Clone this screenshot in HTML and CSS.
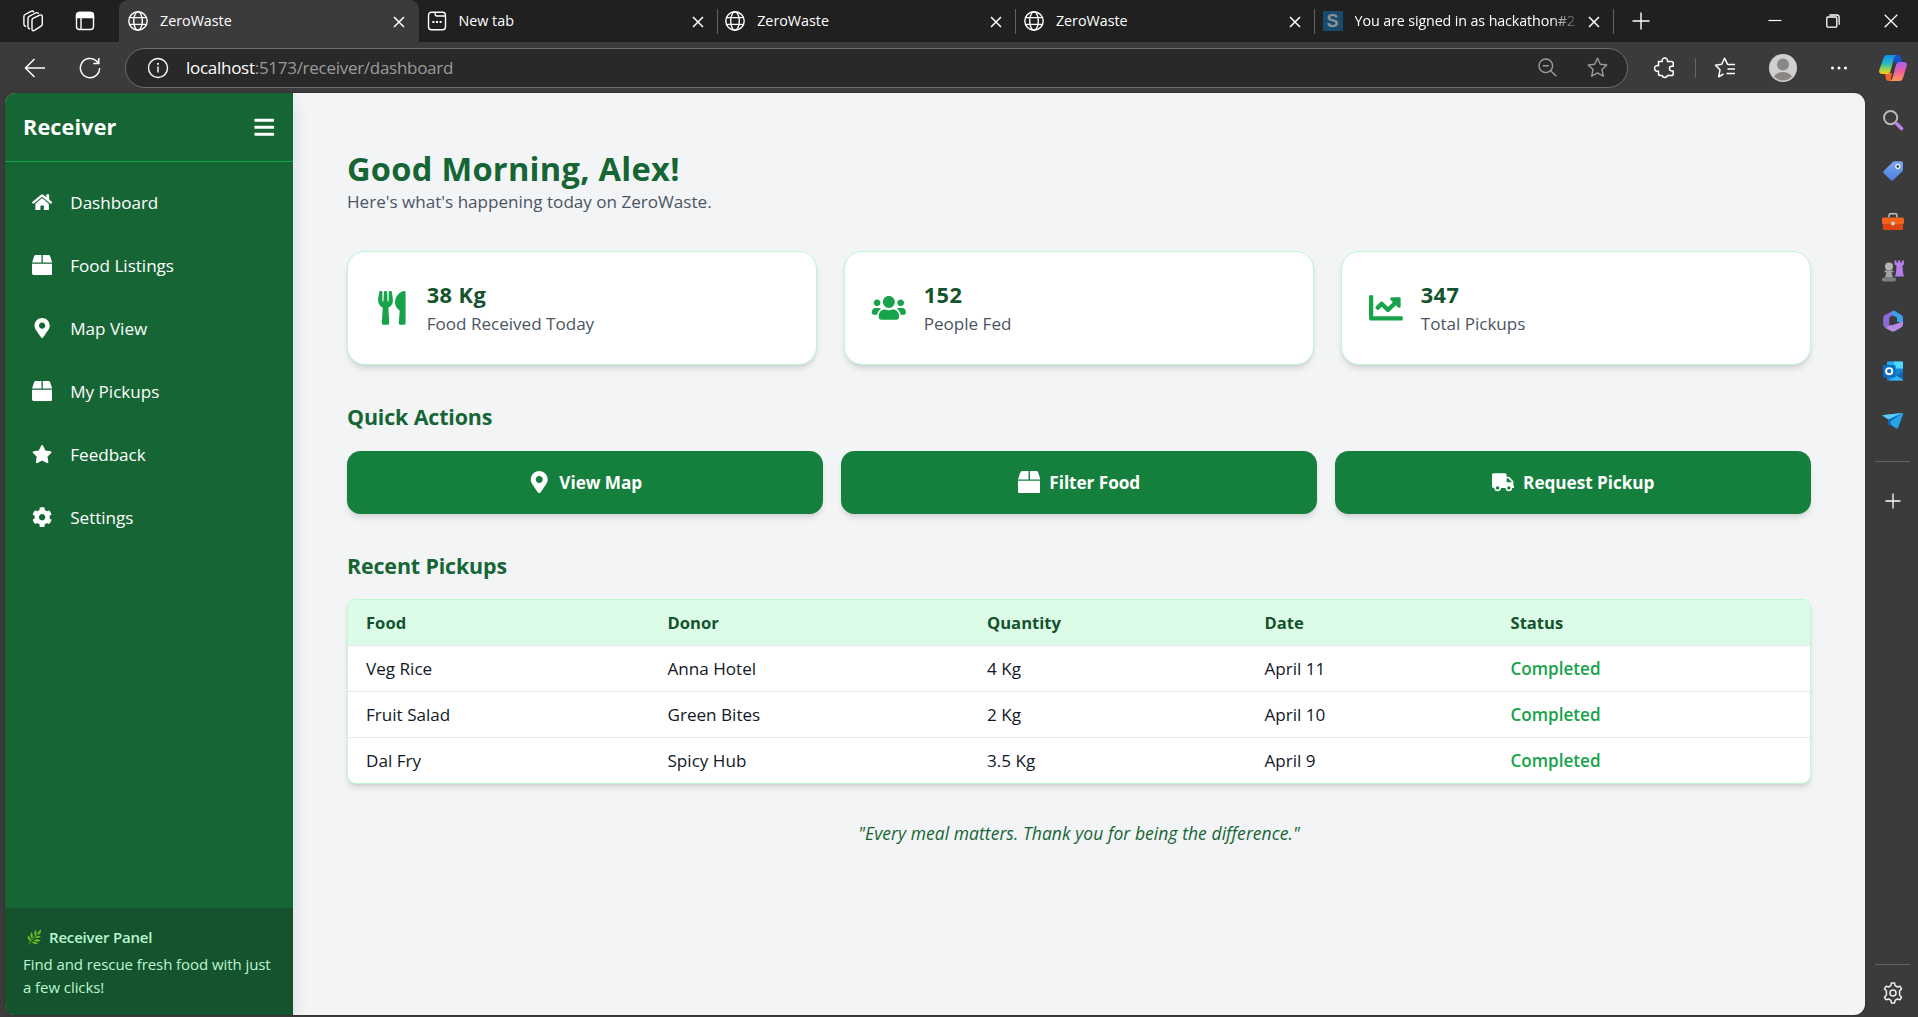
FILE: index.html
```html
<!DOCTYPE html>
<html lang="en">
<head>
<meta charset="utf-8">
<title>ZeroWaste</title>
<link rel="stylesheet" href="styles.css">
</head>
<body>
<svg class="defs" aria-hidden="true">
  <symbol id="globe" viewBox="0 0 20 20"><g fill="none" stroke="currentColor" stroke-width="1.4"><circle cx="10" cy="10" r="9.2"/><ellipse cx="10" cy="10" rx="4.3" ry="9.2"/><path d="M1.6 6.6h16.8M1.6 13.4h16.8"/></g></symbol>
  <symbol id="close" viewBox="0 0 12 12"><path d="M1 1l10 10M11 1L1 11" fill="none" stroke="currentColor" stroke-width="1.5"/></symbol>
  <symbol id="plus" viewBox="0 0 18 18"><path d="M9 .5v17M.5 9h17" fill="none" stroke="currentColor" stroke-width="1.4"/></symbol>
  <symbol id="box" viewBox="0 0 512 512"><path d="M509.5 184.6L458.9 32.8C452.4 13.2 434.1 0 413.4 0H272v192h238.7c-.4-2.5-.4-5-1.2-7.4zM240 0H98.6c-20.7 0-39 13.2-45.5 32.8L2.5 184.6c-.8 2.4-.8 4.9-1.2 7.4H240V0zM0 224v240c0 26.5 21.5 48 48 48h416c26.5 0 48-21.5 48-48V224H0z"/></symbol>
  <symbol id="pin" viewBox="0 0 384 512"><path d="M172.268 501.67C26.97 291.031 0 269.413 0 192 0 85.961 85.961 0 192 0s192 85.961 192 192c0 77.413-26.97 99.031-172.268 309.67-9.535 13.774-29.93 13.773-39.464 0zM192 272c44.183 0 80-35.817 80-80s-35.817-80-80-80-80 35.817-80 80 35.817 80 80 80z"/></symbol>
</svg>

<header class="tabbar">
  <div class="tab-tools">
    <svg width="22" height="22" viewBox="0 0 22 22" fill="none" stroke="currentColor" stroke-width="1.400" stroke-linejoin="round" stroke-linecap="round"><path d="M10 10.200q0-1.400 1.300-2l6.500-3q2.500-1 2.500 1.500v7.500q0 1.300-1.200 2l-6.300 4q-2.800 1.500-2.800-1.300z"/><path d="M7.500 18.800q-1.500-.4-1.500-2V8.300q0-1.300 1.200-2l6.300-3.300q2-.9 2.800.4"/><path d="M3.500 16.300q-1.600-.4-1.600-2V6.500q0-1.300 1.200-2L9 1.400q1.800-.8 2.700.3"/></svg>
    <svg width="20" height="20" viewBox="0 0 20 20" fill="none" stroke="currentColor" stroke-width="1.400"><rect x="1.500" y="1.500" width="17" height="17" rx="3"/><path d="M1.500 6.500V4.500a3 3 0 0 1 3-3h11a3 3 0 0 1 3 3v2z" fill="currentColor"/><path d="M6 6v12.500"/></svg>
  </div>
  <div class="tab active"><svg class="fav"><use href="#globe"/></svg><span class="tab-title">ZeroWaste</span><svg class="x"><use href="#close"/></svg></div>
  <div class="tab"><svg class="fav" viewBox="0 0 20 20" fill="none" stroke="currentColor" stroke-width="1.400"><rect x="1.500" y="1.200" width="17" height="17.600" rx="3"/><path d="M8.200 1.200v2q0 1.800 1.800 1.800h8.500"/><path d="M5.400 11h2M9 11h2M12.600 11h2" stroke-width="2"/></svg><span class="tab-title">New tab</span><svg class="x"><use href="#close"/></svg></div>
  <div class="tab"><svg class="fav"><use href="#globe"/></svg><span class="tab-title">ZeroWaste</span><svg class="x"><use href="#close"/></svg></div>
  <div class="tab"><svg class="fav"><use href="#globe"/></svg><span class="tab-title">ZeroWaste</span><svg class="x"><use href="#close"/></svg></div>
  <div class="tab"><span class="fav skill">S</span><span class="tab-title fade">You are signed in as hackathon#2</span><svg class="x"><use href="#close"/></svg></div>
  <svg class="newtab"><use href="#plus"/></svg>
  <div class="window-buttons">
    <svg width="14" height="14" viewBox="0 0 14 14"><path d="M.5 6.500h13" stroke="currentColor" stroke-width="1.200"/></svg>
    <svg width="14" height="14" viewBox="0 0 14 14" fill="none" stroke="currentColor" stroke-width="1.300"><rect x=".8" y="3" width="10" height="10.200" rx="1.200"/><path d="M3.300 1h7.500q2.300 0 2.300 2.300v7.500"/></svg>
    <svg width="14" height="14" viewBox="0 0 14 14"><path d="M.7.700l12.600 12.600M13.300.7L.7 13.300" stroke="currentColor" stroke-width="1.300"/></svg>
  </div>
</header>

<div class="toolbar">
  <div class="nav-buttons">
    <svg width="22" height="20" viewBox="0 0 22 20" fill="none" stroke="currentColor" stroke-width="1.500"><path d="M21 10H1.500M10.500 1L1.500 10l9 9"/></svg>
    <svg width="22" height="22" viewBox="0 0 22 22" fill="none" stroke="currentColor" stroke-width="1.500"><path d="M20.600 11a9.600 9.600 0 1 1-3.200-7.100L19.500 6M19.800 1v5.500h-5.500"/></svg>
  </div>
  <div class="address">
    <svg width="22" height="22" viewBox="0 0 22 22" fill="none" stroke="currentColor" stroke-width="1.400"><circle cx="11" cy="11" r="9.500"/><path d="M11 9.500v6"/><path d="M11 6v1.800" stroke-width="1.800"/></svg>
    <span class="url"><b>localhost</b>:5173/receiver/dashboard</span>
    <svg class="dim" width="19" height="19" viewBox="0 0 19 19" fill="none" stroke="currentColor" stroke-width="1.400"><circle cx="7.800" cy="7.800" r="6.800"/><path d="M12.700 12.700l5.600 5.600M4.800 7.800h6"/></svg>
    <svg class="dim" width="21" height="21" viewBox="0 0 21 21" fill="none" stroke="currentColor" stroke-width="1.400" stroke-linejoin="round"><path d="M10.500 1.200l2.800 6 6.500.8-4.800 4.500 1.300 6.700-5.800-3.300-5.800 3.300L6 12.500 1.200 8l6.500-.8z"/></svg>
  </div>
  <div class="browser-tools">
    <svg width="22" height="22" viewBox="0 0 22 22" fill="none" stroke="currentColor" stroke-width="1.500" stroke-linejoin="round"><path d="M4.500 4.500h3.700a2.700 2.700 0 1 1 5.200 0h4q1.800 0 1.800 1.800v3h-1.500a2 2 0 0 0 0 4.600h1.500v2.800q0 1.800-1.800 1.800h-4a2.700 2.700 0 0 1-5.200 0H6.300q-1.800 0-1.800-1.800v-2.600a2.900 2.900 0 1 1 0-5.400z"/></svg>
    <i class="divider"></i>
    <svg width="22" height="22" viewBox="0 0 22 22" fill="none" stroke="currentColor" stroke-width="1.500" stroke-linejoin="round"><path d="M21 7.500h-6l-1.500-.3-3-6-2.800 6-6.200 1 4.500 4.600-1.300 7 4.800-2.800M13.500 12H21M12.500 16.500H21"/></svg>
    <svg class="avatar" width="28" height="28" viewBox="0 0 28 28"><clipPath id="c"><circle cx="14" cy="14" r="12.500"/></clipPath><circle cx="14" cy="14" r="14" fill="#d2d0ce"/><circle cx="14" cy="10.500" r="6" fill="#8a8886"/><ellipse cx="14" cy="24.500" rx="9.500" ry="6.500" fill="#8a8886" clip-path="url(#c)"/></svg>
    <svg width="18" height="4" viewBox="0 0 18 4" fill="currentColor"><circle cx="2.500" cy="2" r="1.500"/><circle cx="9" cy="2" r="1.500"/><circle cx="15.500" cy="2" r="1.500"/></svg>
    <svg width="28" height="28" viewBox="0 0 28 28"><defs><linearGradient id="k1" x1="0" y1="0" x2="0" y2="1"><stop offset="0" stop-color="#0f8fe8"/><stop offset=".45" stop-color="#28b9c4"/><stop offset=".75" stop-color="#9bd34a"/><stop offset="1" stop-color="#ffcb1c"/></linearGradient><linearGradient id="k2" x1="0" y1="0" x2="0" y2="1"><stop offset="0" stop-color="#a75cf0"/><stop offset=".5" stop-color="#ee5f9f"/><stop offset="1" stop-color="#ff9a4e"/></linearGradient></defs><path d="M14 1h5q2 0 2.700 2l1.800 6h-7.500z" fill="#1552c8"/><path d="M6 19h7l-1.500 8h-2q-2 0-2.600-2z" fill="#f4642a"/><path d="M8 1h10q-2.300.6-3 3l-3.600 13.500q-.8 2.500-3.500 2.500H3q-3.500 0-2.700-4L4.500 4Q5.500 1 8 1z" fill="url(#k1)"/><path d="M20.500 27h-10q2.300-.6 3-3l3.600-13.500Q17.900 8 20.600 8H25q3.600 0 2.700 4L24 24q-1 3-3.500 3z" fill="url(#k2)"/></svg>
  </div>
</div>

<div class="window">
  <div class="page">
    <aside class="sidebar">
      <div class="side-head"><h2>Receiver</h2><svg width="22.500" height="22.500" viewBox="0 0 448 512"><path d="M16 132h416c8.837 0 16-7.163 16-16V76c0-8.837-7.163-16-16-16H16C7.163 60 0 67.163 0 76v40c0 8.837 7.163 16 16 16zm0 160h416c8.837 0 16-7.163 16-16v-40c0-8.837-7.163-16-16-16H16c-8.837 0-16 7.163-16 16v40c0 8.837 7.163 16 16 16zm0 160h416c8.837 0 16-7.163 16-16v-40c0-8.837-7.163-16-16-16H16c-8.837 0-16 7.163-16 16v40c0 8.837 7.163 16 16 16z"/></svg></div>
      <nav class="side-nav">
        <a><svg viewBox="0 0 576 512"><path d="M280.37 148.26L96 300.11V464a16 16 0 0 0 16 16l112.06-.29a16 16 0 0 0 15.920-16V368a16 16 0 0 1 16-16h64a16 16 0 0 1 16 16v95.640a16 16 0 0 0 16 16.050L464 480a16 16 0 0 0 16-16V300L295.670 148.260a12.190 12.190 0 0 0-15.300 0zM571.600 251.470L488 182.560V44.050a12 12 0 0 0-12-12h-56a12 12 0 0 0-12 12v72.610L318.470 43a48 48 0 0 0-61 0L4.340 251.470a12 12 0 0 0-1.600 16.900l25.500 31A12 12 0 0 0 45.150 301l235.220-193.740a12.190 12.190 0 0 1 15.300 0L530.900 301a12 12 0 0 0 16.900-1.600l25.500-31a12 12 0 0 0-1.700-16.930z"/></svg>Dashboard</a>
        <a><svg><use href="#box"/></svg>Food Listings</a>
        <a><svg><use href="#pin"/></svg>Map View</a>
        <a><svg><use href="#box"/></svg>My Pickups</a>
        <a><svg viewBox="0 0 576 512"><path d="M259.300 17.800L194 150.200 47.900 171.500c-26.200 3.800-36.700 36.100-17.700 54.600l105.700 103-25 145.500c-4.500 26.300 23.200 46 46.400 33.700L288 439.600l130.700 68.700c23.200 12.200 50.900-7.400 46.400-33.700l-25-145.500 105.700-103c19-18.500 8.500-50.800-17.700-54.600L382 150.200 316.700 17.800c-11.700-23.600-45.600-23.900-57.400 0z"/></svg>Feedback</a>
        <a><svg viewBox="0 0 512 512"><path d="M487.400 315.700l-42.600-24.600c4.300-23.200 4.300-47 0-70.200l42.600-24.600c4.900-2.800 7.100-8.600 5.500-14-11.100-35.600-30-67.800-54.700-94.600-3.800-4.100-10-5.100-14.800-2.300L380.800 110c-17.900-15.400-38.500-27.300-60.800-35.100V25.800c0-5.600-3.900-10.500-9.400-11.700-36.700-8.200-74.300-7.800-109.200 0-5.500 1.200-9.400 6.100-9.400 11.700V75c-22.200 7.900-42.800 19.800-60.800 35.100L88.700 85.500c-4.900-2.800-11-1.900-14.800 2.300-24.700 26.700-43.600 58.900-54.700 94.600-1.700 5.400.6 11.200 5.500 14L67.300 221c-4.300 23.200-4.300 47 0 70.200l-42.600 24.600c-4.900 2.800-7.100 8.600-5.500 14 11.100 35.600 30 67.800 54.700 94.600 3.800 4.100 10 5.100 14.800 2.300l42.600-24.600c17.900 15.400 38.500 27.300 60.800 35.100v49.200c0 5.600 3.900 10.500 9.400 11.700 36.700 8.200 74.300 7.800 109.200 0 5.500-1.200 9.400-6.100 9.400-11.700v-49.200c22.200-7.900 42.800-19.800 60.800-35.100l42.600 24.600c4.900 2.800 11 1.900 14.800-2.300 24.700-26.700 43.600-58.900 54.700-94.600 1.500-5.500-.7-11.300-5.600-14.100zM256 336c-44.100 0-80-35.900-80-80s35.900-80 80-80 80 35.900 80 80-35.900 80-80 80z"/></svg>Settings</a>
      </nav>
      <div class="side-foot">
        <p class="panel"><svg width="15" height="16" viewBox="0 0 15 16" fill="#6cc024"><path d="M2 15.500Q5 9 11.500 4" fill="none" stroke="#4b9a1c" stroke-width="1.200"/><path d="M14 .5q.5 4.500-3 5-.5-3.500 3-5zM8.500.8q2.200 3-.3 6-2-3 .3-6zM4.300 3q2.500 3 .8 6.500Q2.300 7 4.300 3zM.8 6.500q3.200 1.800 3 5.500Q.2 11 .8 6.500zM14 7q-2.500 3.200-6 1.500Q10 5.800 14 7zM13.500 11.500q-4 2.500-7-.2 3.500-2.300 7 .2zM11 14.700q-4 1.300-6.500-1.700 4-1 6.500 1.700z"/></svg>Receiver Panel</p>
        <p>Find and rescue fresh food with just a few clicks!</p>
      </div>
    </aside>
    <main>
      <h1>Good Morning, Alex!</h1>
      <p class="sub">Here's what's happening today on ZeroWaste.</p>
      <section class="cards">
        <div class="card"><svg viewBox="0 0 416 512"><path d="M207.900 15.200c.8 4.700 16.100 94.500 16.100 128.800 0 52.300-27.800 89.600-68.900 104.600L168 486.700c.7 13.700-10.200 25.300-24 25.300H80c-13.700 0-24.700-11.500-24-25.300l12.900-238.100C27.700 233.600 0 196.200 0 144 0 109.600 15.300 19.900 16.100 15.200 19.300-5.100 61.400-5.400 64 16.300v141.200c1.300 3.400 15.100 3.200 16 0 1.400-25.300 7.900-139.200 8-141.800 3.300-20.800 44.700-20.800 47.900 0 .2 2.700 6.600 116.500 8 141.800.9 3.200 14.800 3.400 16 0V16.300c2.600-21.600 44.800-21.400 48-1.100zm119.200 285.700l-15 185.100c-1.200 14 9.900 26 23.900 26h56c13.300 0 24-10.700 24-24V24c0-13.200-10.700-24-24-24-82.500 0-221.400 178.500-64.900 300.900z"/></svg><div><h3>38 Kg</h3><p>Food Received Today</p></div></div>
        <div class="card"><svg viewBox="0 0 640 512"><path d="M96 224c35.300 0 64-28.700 64-64s-28.700-64-64-64-64 28.700-64 64 28.700 64 64 64zm448 0c35.300 0 64-28.700 64-64s-28.700-64-64-64-64 28.700-64 64 28.700 64 64 64zm32 32h-64c-17.600 0-33.500 7.100-45.100 18.600 40.300 22.100 68.900 62 75.100 109.400h66c17.700 0 32-14.300 32-32v-32c0-35.300-28.700-64-64-64zm-256 0c61.900 0 112-50.100 112-112S381.900 32 320 32 208 82.100 208 144s50.100 112 112 112zm76.800 32h-8.300c-20.800 10-43.900 16-68.500 16s-47.600-6-68.500-16h-8.300C179.600 288 128 339.600 128 403.200V432c0 26.500 21.500 48 48 48h288c26.500 0 48-21.500 48-48v-28.800c0-63.600-51.600-115.200-115.200-115.200zm-223.700-13.400C161.500 263.100 145.600 256 128 256H64c-35.300 0-64 28.700-64 64v32c0 17.700 14.300 32 32 32h65.900c6.300-47.400 34.900-87.300 75.200-109.400z"/></svg><div><h3>152</h3><p>People Fed</p></div></div>
        <div class="card"><svg viewBox="0 0 512 512"><path d="M496 384H64V80c0-8.840-7.160-16-16-16H16C7.160 64 0 71.160 0 80v336c0 17.670 14.330 32 32 32h464c8.840 0 16-7.160 16-16v-32c0-8.840-7.160-16-16-16zM464 96H345.940c-21.380 0-32.090 25.850-16.970 40.970l32.400 32.400L288 242.750l-73.370-73.370c-12.500-12.500-32.760-12.500-45.250 0l-68.690 68.690c-6.250 6.250-6.250 16.380 0 22.630l22.620 22.620c6.250 6.250 16.380 6.250 22.630 0L192 237.250l73.370 73.370c12.500 12.500 32.760 12.500 45.250 0l96-96 32.400 32.400c15.120 15.120 40.970 4.410 40.970-16.970V112c.01-8.840-7.150-16-15.990-16z"/></svg><div><h3>347</h3><p>Total Pickups</p></div></div>
      </section>
      <section>
        <h2>Quick Actions</h2>
        <div class="actions">
          <button><svg><use href="#pin"/></svg>View Map</button>
          <button><svg><use href="#box"/></svg>Filter Food</button>
          <button><svg viewBox="0 0 640 512"><path d="M624 352h-16V243.900c0-12.700-5.100-24.900-14.100-33.900L494 110.100c-9-9-21.200-14.100-33.900-14.100H416V48c0-26.500-21.500-48-48-48H48C21.500 0 0 21.500 0 48v320c0 26.500 21.500 48 48 48h16c0 53 43 96 96 96s96-43 96-96h128c0 53 43 96 96 96s96-43 96-96h48c8.800 0 16-7.200 16-16v-32c0-8.800-7.200-16-16-16zM160 464c-26.500 0-48-21.500-48-48s21.500-48 48-48 48 21.500 48 48-21.500 48-48 48zm320 0c-26.500 0-48-21.500-48-48s21.500-48 48-48 48 21.500 48 48-21.500 48-48 48zm80-208H416V144h44.100l99.900 99.900V256z"/></svg>Request Pickup</button>
        </div>
      </section>
      <section>
        <h2>Recent Pickups</h2>
        <div class="table-wrap">
          <table>
            <colgroup><col class="c1"><col class="c2"><col class="c3"><col class="c4"><col></colgroup>
            <thead><tr><th>Food</th><th>Donor</th><th>Quantity</th><th>Date</th><th>Status</th></tr></thead>
            <tbody>
              <tr><td>Veg Rice</td><td>Anna Hotel</td><td>4 Kg</td><td>April 11</td><td class="done">Completed</td></tr>
              <tr><td>Fruit Salad</td><td>Green Bites</td><td>2 Kg</td><td>April 10</td><td class="done">Completed</td></tr>
              <tr><td>Dal Fry</td><td>Spicy Hub</td><td>3.5 Kg</td><td>April 9</td><td class="done">Completed</td></tr>
            </tbody>
          </table>
        </div>
      </section>
      <p class="quote">"Every meal matters. Thank you for being the difference."</p>
    </main>
  </div>

  <div class="rail">
    <svg viewBox="0 0 22 22" fill="none"><circle cx="8.600" cy="8.600" r="6.600" stroke="#b9b9b9" stroke-width="2"/><path d="M15 15l4.500 4.500" stroke="#b583ea" stroke-width="3.600" stroke-linecap="round"/></svg>
    <svg viewBox="0 0 22 22"><defs><linearGradient id="tg" x1="0" y1="0" x2="0" y2="1"><stop offset="0" stop-color="#7aa7f3"/><stop offset="1" stop-color="#4a7fe0"/></linearGradient></defs><g transform="translate(0 1)"><path d="M12.500 1.200h6.500q2 0 2 2V9.500q0 1-.7 1.700l-8.900 8.900q-1.400 1.200-2.800 0L1.900 13.400q-1.200-1.300 0-2.700L10.800 2q.7-.8 1.700-.8z" fill="url(#tg)"/><circle cx="15.800" cy="6.500" r="2" fill="#333" stroke="#e8eefc" stroke-width="1.400"/></g></svg>
    <svg viewBox="0 0 22 22"><path d="M7 8.500V6.400q0-1.600 1.600-1.600h4.800q1.600 0 1.600 1.600v2.100" fill="none" stroke="#c4c4c4" stroke-width="1.500"/><rect x="1" y="12" width="20" height="9" rx="1.500" fill="#dd4513"/><rect y="8.500" width="22" height="6.500" rx="1.500" fill="#f4631e"/><circle cx="11" cy="14.500" r="2" fill="#cfcfcf"/></svg>
    <svg viewBox="0 0 22 22"><path d="M12.500.5h2v2h1.600v-2h2.200v2h1.600v-2h2v4l-1.500 1.200.6 7.300 1 3.500h-9l1-3.500.6-7.300-2.100-1.200z" fill="#b57ee8"/><circle cx="7" cy="6.500" r="4" fill="#b5b5b5"/><path d="M2.500 10.500h9v1.800H9.500l1.500 5.200h-8l1.500-5.200h-2z" fill="#a3a3a3"/><rect y="17.500" width="14" height="4" rx="1.800" fill="#7e7e7e"/></svg>
    <svg viewBox="0 0 22 22"><path d="M10.500 1L2.700 5.200Q1.200 6 1.200 8v6.500q0 2 1.500 2.800L6 19l2.600-3-1.400-1V8.500q0-1.200 1-1.800L14 3.500Q12 0 10.500 1z" fill="#8a6ad8"/><path d="M12.500.8l7 4.300q1.500 1 1.500 2.900v6l-6-2.500V8.500q0-1-1-1.500l-4-1.800V1.800Q11.500 0 12.500.8z" fill="#3aa0e8"/><path d="M21 11.500v3q0 1.800-1.500 2.700L13 21q-2 1-4 0l-5.500-3 5-3q1.500.6 2.500 0z" fill="#b68be4"/></svg>
    <svg viewBox="0 0 22 22"><rect x="5" y="1.500" width="16" height="19" rx="1.500" fill="#1784d8"/><path d="M6 1.500h6v7H5v-6q0-1 1-1z" fill="#28a8ea"/><path d="M12 1.500h8q1 0 1 1v6h-9z" fill="#50d9ff"/><path d="M21 10.500v9q0 1-1 1H7z" fill="#32b5f0"/><path d="M21 10.500l-7 5 7 4z" fill="#1268b8"/><rect x="1" y="5" width="12.500" height="12.500" rx="1.200" fill="#0a6cc4"/><circle cx="7.200" cy="11.200" r="3.100" fill="none" stroke="#fff" stroke-width="1.900"/></svg>
    <svg viewBox="0 0 22 22"><path d="M0 5.200L20 3q1.500 0 1 1.500L16 18q-1 1-2.200.3L10 15.500 6.500 13V9.500z" fill="#25a5e8"/><path d="M0 5.200L20 3 6.500 9.500z" fill="#58cdfb"/><path d="M6.500 9.500L20.500 3.300 8.500 11v4.500L6.500 16z" fill="#0c63b4"/></svg>
    <i class="rule"></i>
    <svg class="add" viewBox="0 0 18 18"><path d="M9 1.500v15M1.500 9h15" stroke="#fff" stroke-width="1.300"/></svg>
    <div class="rail-end">
      <i class="rule"></i>
      <svg class="gear" viewBox="0 0 24 24" fill="none" stroke="#eee" stroke-width="1.500" stroke-linejoin="round"><circle cx="12" cy="12" r="3"/><path d="M9.900 4.600l.5-2.500q1.600-.4 3.200 0l.5 2.500 2.300 1.400 2.500-.8q1.100 1.200 1.600 2.800l-1.900 1.700v4.600l1.900 1.700q-.5 1.600-1.600 2.800l-2.500-.8-2.300 1.400-.5 2.500q-1.600.4-3.200 0l-.5-2.500L7.600 18l-2.500.8Q4 17.600 3.500 16l1.900-1.700V9.700L3.500 8Q4 6.400 5.100 5.200l2.500.8z"/></svg>
    </div>
  </div>
</div>
</body>
</html>
```
FILE: styles.css
```css
* { box-sizing: border-box; margin: 0; padding: 0; }
html, body { height: 100%; }
body {
  display: flex; flex-direction: column;
  width: 1918px; height: 1017px; overflow: hidden;
  background: #3b3b3b; color: #fff;
  font-family: "Open Sans", "Noto Sans", sans-serif;
  font-size: 17.1px; line-height: 27px;
}
svg { display: block; flex: none; }
.defs { position: absolute; width: 0; height: 0; }

/* browser tab strip */
.tabbar { display: flex; align-items: center; height: 42px; flex: none; background: #202020; }
.tab-tools { display: flex; align-items: center; gap: 31px; width: 119px; height: 42px; padding-left: 22px; }
.tab {
  display: flex; align-items: center; width: 298.700px; height: 42px;
  padding: 0 14px 0 7.500px; font-size: 14.300px; color: #fff; position: relative;
}
.tab.active { background: #3b3b3b; border-radius: 9px 9px 0 0; width: 300px; padding: 0 14px 0 9px; }
.tab:not(.active)::after { content: ""; position: absolute; right: 0; top: 9px; width: 1px; height: 25px; background: #636363; }
.fav { width: 20px; height: 20px; margin-right: 12px; flex: none; }
.skill { background: #174a6d; color: #8d9196; font: bold 18px/20px "Liberation Sans", sans-serif; text-align: center; }
.tab-title { flex: 1; white-space: nowrap; line-height: 42px; padding-bottom: 1px; }
.fade { letter-spacing: -.12px; -webkit-mask-image: linear-gradient(90deg, #000 84%, transparent 97%); mask-image: linear-gradient(90deg, #000 84%, transparent 97%); }
.x { width: 12px; height: 12px; margin: 2px 0 0; }
.newtab { width: 18px; height: 18px; margin-left: 18px; }
.window-buttons { display: flex; gap: 44px; margin-left: auto; padding-right: 20px; }

/* address row */
.toolbar { display: flex; align-items: center; height: 51px; flex: none; }
.nav-buttons { display: flex; align-items: center; gap: 33px; width: 125px; padding-left: 24px; }
.address {
  display: flex; align-items: center; width: 1503px; height: 40px;
  border: 1px solid #6b6b6b; border-radius: 20px; background: #292929; padding: 0 19px 0 21px;
}
.url { flex: 1; margin-left: 17px; color: #9b9b9b; font-size: 17px; letter-spacing: -.28px; }
.url b { font-weight: 400; color: #fff; }
.dim { color: #9b9b9b; margin-left: 30px; }
.browser-tools { display: flex; align-items: center; padding-left: 26px; }
.divider { width: 1px; height: 20px; background: #666; margin: 0 18px 0 19px; }
.avatar { margin: 0 33px; }
.browser-tools svg:last-child { margin-left: 31px; }

/* viewport and right rail */
.window { display: flex; flex: 1; padding: 0 0 2px 5px; min-height: 0; }
.page {
  display: flex; width: 1860px; border-radius: 11px; overflow: hidden;
  background: #f3f4f6; color: #111827; box-shadow: 0 0 2px rgba(0,0,0,.35);
}
.rail { display: flex; flex-direction: column; align-items: center; width: 53px; padding: 16px 0 0 2px; }
.rail > svg { width: 22px; height: 22px; margin-bottom: 28.200px; }
.rule { width: 35px; height: 1px; background: #636363; flex: none; }
.rail > .rule { margin-top: 1px; }
.rail > .add { width: 18px; height: 18px; margin: 30px 0 0; }
.rail-end { display: flex; flex-direction: column; align-items: center; margin-top: auto; padding-bottom: 10px; }
.gear { width: 24px; height: 24px; margin-top: 16px; }

/* app sidebar */
.sidebar {
  display: flex; flex-direction: column; width: 288px; flex: none; z-index: 1;
  background: #166534; color: #fff; box-shadow: 0 9px 17px rgba(0,0,0,.1);
}
.side-head { display: flex; align-items: center; justify-content: space-between; height: 69px; padding: 0 18px; border-bottom: 1px solid #16a34a; }
.side-head h2 { font-size: 21.600px; line-height: 31.500px; letter-spacing: .15px; padding-bottom: 1px; }
.side-head svg, .side-nav svg { fill: #fff; }
.side-nav { display: flex; flex-direction: column; gap: 9px; padding: 13.500px; }
.side-nav a { display: flex; align-items: center; gap: 18px; height: 54px; padding: 0 13.500px; letter-spacing: -.02px; }
.side-nav svg { width: 20.250px; height: 20.250px; }
.side-foot { height: 107px; margin-top: auto; padding: 18px; background: #14532d; color: #bbf7d0; font-size: 15px; line-height: 22.500px; letter-spacing: -.07px; }
.panel { display: flex; align-items: center; gap: 7px; padding-left: 4px; margin-bottom: 4.500px; font-weight: 600; letter-spacing: -.18px; }

/* dashboard */
main { flex: 1; padding: 54px; }
h1 { font-size: 32.600px; line-height: 40.500px; letter-spacing: .28px; color: #166534; padding-top: 2px; height: 40.500px; }
.sub { color: #4b5563; letter-spacing: -.01px; }
.cards { display: grid; grid-template-columns: repeat(3, 1fr); gap: 27px; margin: 36px 0; }
.card {
  display: flex; align-items: center; gap: 18px; height: 114.500px; padding: 27px;
  background: #fff; border: 1px solid #bbf7d0; border-radius: 18px;
  box-shadow: 0 4.500px 6.700px -1px rgba(0,0,0,.1), 0 2px 4.500px -2px rgba(0,0,0,.1);
}
.card svg { width: 33.750px; height: 33.750px; fill: #16a34a; }
.card h3 { font-size: 21.800px; line-height: 31.500px; color: #14532d; letter-spacing: .4px; }
.card p { color: #4b5563; line-height: 26px; letter-spacing: -.02px; }
main h2 { font-size: 21.400px; line-height: 31.500px; letter-spacing: -.13px; color: #166534; margin-bottom: 18px; }
.actions { display: grid; grid-template-columns: repeat(3, 1fr); gap: 18px; margin-bottom: 36px; }
button {
  display: flex; align-items: center; justify-content: center; gap: 9px; height: 63px;
  border: 0; border-radius: 13.500px; background: #15803d; color: #fff;
  font: 700 17.200px/27px "Open Sans", sans-serif; letter-spacing: -.05px;
  box-shadow: 0 4.500px 6.700px -1px rgba(0,0,0,.1), 0 2px 4.500px -2px rgba(0,0,0,.1);
}
button svg { width: 22.500px; height: 22.500px; fill: #fff; }
.table-wrap {
  margin-top: -.5px;
  border: 1px solid #bbf7d0; border-radius: 9px; overflow: hidden; background: #fff;
  box-shadow: 0 4.500px 6.700px -1px rgba(0,0,0,.1), 0 2px 4.500px -2px rgba(0,0,0,.1);
}
table { width: 100%; table-layout: fixed; border-collapse: separate; border-spacing: 0; text-align: left; }
.c1 { width: 301.500px; } .c2 { width: 319.500px; } .c3 { width: 277.500px; } .c4 { width: 246px; }
th, td { height: 45px; padding: 0 18px; letter-spacing: 0; }
td { border-top: 1px solid #e5e7eb; height: 46px; }
thead { background: #dcfce7; color: #14532d; }
th { font-weight: 700; font-size: 16.600px; }
.done { color: #16a34a; font-weight: 600; font-size: 17.100px; }
.quote { margin-top: 36px; text-align: center; font-style: italic; color: #166534; font-size: 17.500px; letter-spacing: .05px; }
```
